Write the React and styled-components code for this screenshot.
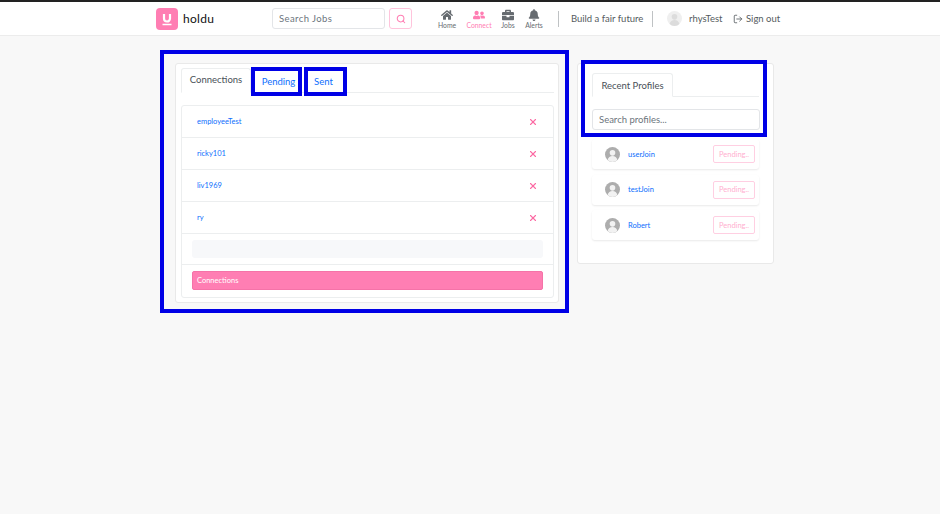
import React from 'react';
import styled, { createGlobalStyle } from 'styled-components';
import { FaHome, FaUserFriends, FaBriefcase, FaBell } from 'react-icons/fa';
import { LuLogOut, LuX, LuSearch } from 'react-icons/lu';

const pink = '#ff7eb3';
const blue = '#0d6efd';
const mark = '#0000e6';
const font = '"Lato", "Liberation Sans", sans-serif';

const GlobalStyle = createGlobalStyle`
  html, body { margin: 0; padding: 0; height: 100%; background: #f8f8f8; }
  body { font-family: ${font}; overflow: hidden; }
  * { box-sizing: border-box; }
`;

const Page = styled.div`
  width: 940px;
  height: 514px;
  background: #f8f8f8;
  border-top: 2px solid #222;
`;

const NavBar = styled.header`
  height: 34px;
  background: #fff;
  border-bottom: 1px solid #ececec;
  display: flex;
  align-items: center;
  padding-left: 156px;
`;

const Brand = styled.div`
  display: flex;
  align-items: center;
  gap: 5px;
  width: 116px;
  font-size: 12px;
  color: #111;
  letter-spacing: 0.3px;
`;

const NavSearch = styled.input`
  width: 113px;
  height: 21px;
  border: 1px solid #e3e5e8;
  border-radius: 3px;
  padding: 0 6px;
  font: 9.5px ${font};
  letter-spacing: 0.4px;
  outline: none;
  &::placeholder { color: #6c757d; opacity: 1; }
`;

const NavSearchButton = styled.button`
  width: 23px;
  height: 21px;
  margin-left: 4px;
  padding: 0;
  background: #fff;
  border: 1px solid #ffc4dc;
  border-radius: 3px;
  color: ${pink};
  display: flex;
  align-items: center;
  justify-content: center;
`;

const NavLinks = styled.nav`
  display: flex;
  margin: 1px 8px 0 22px;
`;

const NavLink = styled.a`
  width: ${p => p.$w}px;
  display: flex;
  flex-direction: column;
  align-items: center;
  font-size: 6.8px;
  line-height: 8px;
  color: ${p => (p.$active ? pink : '#666b70')};
`;

const Divider = styled.span`
  width: 1px;
  height: 16px;
  background: #bfc2c4;
`;

const Motto = styled.span`
  font-size: 9.5px;
  color: #555b60;
  margin: 0 9px 0 12px;
  width: 72px;
  white-space: nowrap;
`;

const UserArea = styled.div`
  display: flex;
  align-items: center;
  margin-left: 14px;
`;

const UserName = styled.span`
  font-size: 9.5px;
  color: #555b60;
  margin-left: 7px;
  width: 44px;
`;

const SignOut = styled.span`
  display: flex;
  align-items: center;
  gap: 3px;
  font-size: 9.5px;
  color: #555b60;
`;

const Content = styled.main`
  display: flex;
  align-items: flex-start;
  padding: 14px 0 0 160px;
`;

const MarkedBox = styled.section`
  width: 409px;
  height: 263px;
  border: 4px solid ${mark};
  padding: 9px 6px 6px 11px;
`;

const Card = styled.div`
  background: #fff;
  border: 1px solid #e9e9e9;
  border-radius: 3px;
`;

const LeftCard = styled(Card)`
  height: 240px;
  padding: 4px 4px 4px 5px;
`;

const TabBar = styled.div`
  display: flex;
  height: 25px;
  border-bottom: 1px solid #eceeef;
`;

const ActiveTab = styled.div`
  width: 70px;
  height: 25px;
  padding-bottom: 2px;
  display: flex;
  align-items: center;
  justify-content: center;
  font-size: 9.5px;
  color: #495057;
  background: #fff;
  border: 1px solid #eceeef;
  border-bottom: 1px solid #fff;
  border-radius: 3px 3px 0 0;
`;

const MarkedTab = styled.div`
  width: ${p => p.$w}px;
  height: 29px;
  margin: -1px ${p => p.$gap}px 0 0;
  padding: 0 ${p => p.$right}px 1px ${p => p.$left}px;
  display: flex;
  align-items: center;
  justify-content: center;
  font-size: 9.5px;
  color: ${blue};
  background: #fff;
  border: 4px solid ${mark};
`;

const List = styled.div`
  margin-top: 12px;
  border: 1px solid #eceeef;
  border-radius: 3px;
`;

const Row = styled.div`
  height: 32px;
  display: flex;
  align-items: center;
  justify-content: space-between;
  padding: 0 15px;
  border-bottom: 1px solid #eceeef;
  font-size: 7.5px;
  color: ${blue};
`;

const BoxRow = styled.div`
  height: ${p => p.$h}px;
  padding: 6px 10px 0;
  border-bottom: ${p => (p.$line ? '1px solid #eceeef' : 'none')};
`;

const EmptyBox = styled.div`
  height: 18px;
  background: #f7f8fa;
  border-radius: 3px;
`;

const PinkBar = styled.div`
  height: 19px;
  background: ${pink};
  border: 1px solid #f573a8;
  border-radius: 2px;
  padding: 0 4px;
  display: flex;
  align-items: center;
  color: #fff;
  font-size: 7.5px;
`;

const RightCard = styled(Card)`
  width: 197px;
  height: 201px;
  margin: 13px 0 0 8px;
  padding: 9px 14px 0 14px;
  position: relative;
`;

const MarkOverlay = styled.div`
  position: absolute;
  left: 3px;
  top: -4px;
  width: 186px;
  height: 77px;
  border: 4px solid ${mark};
  pointer-events: none;
`;

const RecentBar = styled.div`
  height: 24px;
  border-bottom: 1px solid #eceeef;
  display: flex;
`;

const RecentTab = styled.div`
  width: 81px;
  height: 24px;
  border: 1px solid #eceeef;
  border-bottom: 1px solid #fff;
  border-radius: 3px 3px 0 0;
  font-size: 9.5px;
  color: #495057;
  display: flex;
  align-items: center;
  justify-content: center;
`;

const ProfileSearch = styled.input`
  display: block;
  width: 168px;
  height: 21px;
  margin-top: 12px;
  border: 1px solid #e3e5e8;
  border-radius: 3px;
  padding: 0 6px;
  font: 9.5px ${font};
  outline: none;
  &::placeholder { color: #6c757d; opacity: 1; }
`;

const ProfileList = styled.div`
  margin-top: 9px;
  display: flex;
  flex-direction: column;
  gap: 5.5px;
`;

const ProfileRow = styled.div`
  height: 30px;
  display: flex;
  align-items: center;
  padding: 0 4px 0 13px;
  border-radius: 3px;
  box-shadow: 0 1px 2px rgba(0, 0, 0, 0.09);
  font-size: 7.5px;
  color: ${blue};
`;

const ProfileName = styled.span`
  margin-left: 8px;
  flex: 1;
`;

const PendingButton = styled.span`
  width: 42px;
  height: 18px;
  border: 1px solid #ffcfe2;
  border-radius: 2px;
  color: #ffb0d0;
  font-size: 7.5px;
  display: flex;
  align-items: center;
  justify-content: center;
`;

const Logo = () => (
  <svg width="22" height="22" viewBox="0 0 22 22">
    <rect width="22" height="22" rx="4" fill={pink} />
    <path d="M8 6v4.5a3 3 0 0 0 6 0V6" fill="none" stroke="#fff" strokeWidth="2.2" />
    <path d="M6.5 16.5h9" stroke="#fff" strokeWidth="1.5" />
  </svg>
);

const Avatar = ({ size, bg, fg }) => (
  <svg width={size} height={size} viewBox="0 0 16 16">
    <circle cx="8" cy="8" r="8" fill={bg} />
    <circle cx="8" cy="6.2" r="3" fill={fg} />
    <path d="M2.8 13.8c.6-3 2.6-4.3 5.2-4.3s4.6 1.3 5.2 4.3A8 8 0 0 1 8 16a8 8 0 0 1-5.2-2.2z" fill={fg} />
  </svg>
);

const links = [
  { label: 'Home', Icon: FaHome, w: 26 },
  { label: 'Connect', Icon: FaUserFriends, w: 38, active: true },
  { label: 'Jobs', Icon: FaBriefcase, w: 20 },
  { label: 'Alerts', Icon: FaBell, w: 32 },
];

const connections = ['employeeTest', 'ricky101', 'liv1969', 'ry'];
const profiles = ['userJoin', 'testJoin', 'Robert'];

export default function App() {
  return (
    <Page>
      <GlobalStyle />
      <NavBar>
        <Brand>
          <Logo />
          holdu
        </Brand>
        <NavSearch placeholder="Search Jobs" />
        <NavSearchButton>
          <LuSearch size={10} strokeWidth={2.5} />
        </NavSearchButton>
        <NavLinks>
          {links.map(({ label, Icon, w, active }) => (
            <NavLink key={label} $w={w} $active={active}>
              <Icon size={12} />
              {label}
            </NavLink>
          ))}
        </NavLinks>
        <Divider />
        <Motto>Build a fair future</Motto>
        <Divider />
        <UserArea>
          <Avatar size={15} bg="#efefef" fg="#dcdcdc" />
          <UserName>rhysTest</UserName>
          <SignOut>
            <LuLogOut size={10} />
            Sign out
          </SignOut>
        </UserArea>
      </NavBar>
      <Content>
        <MarkedBox>
          <LeftCard>
            <TabBar>
              <ActiveTab>Connections</ActiveTab>
              <MarkedTab $w={51} $gap={2} $left={4} $right={0}>Pending</MarkedTab>
              <MarkedTab $w={43} $gap={0} $left={0} $right={4}>Sent</MarkedTab>
            </TabBar>
            <List>
              {connections.map(name => (
                <Row key={name}>
                  {name}
                  <LuX size={10} color="#fb6aa4" strokeWidth={2.6} />
                </Row>
              ))}
              <BoxRow $h={31} $line>
                <EmptyBox />
              </BoxRow>
              <BoxRow $h={32}>
                <PinkBar>Connections</PinkBar>
              </BoxRow>
            </List>
          </LeftCard>
        </MarkedBox>
        <RightCard>
          <MarkOverlay />
          <RecentBar>
            <RecentTab>Recent Profiles</RecentTab>
          </RecentBar>
          <ProfileSearch placeholder="Search profiles..." />
          <ProfileList>
            {profiles.map(name => (
              <ProfileRow key={name}>
                <Avatar size={15} bg="#adadad" fg="#f2f2f2" />
                <ProfileName>{name}</ProfileName>
                <PendingButton>Pending..</PendingButton>
              </ProfileRow>
            ))}
          </ProfileList>
        </RightCard>
      </Content>
    </Page>
  );
}
